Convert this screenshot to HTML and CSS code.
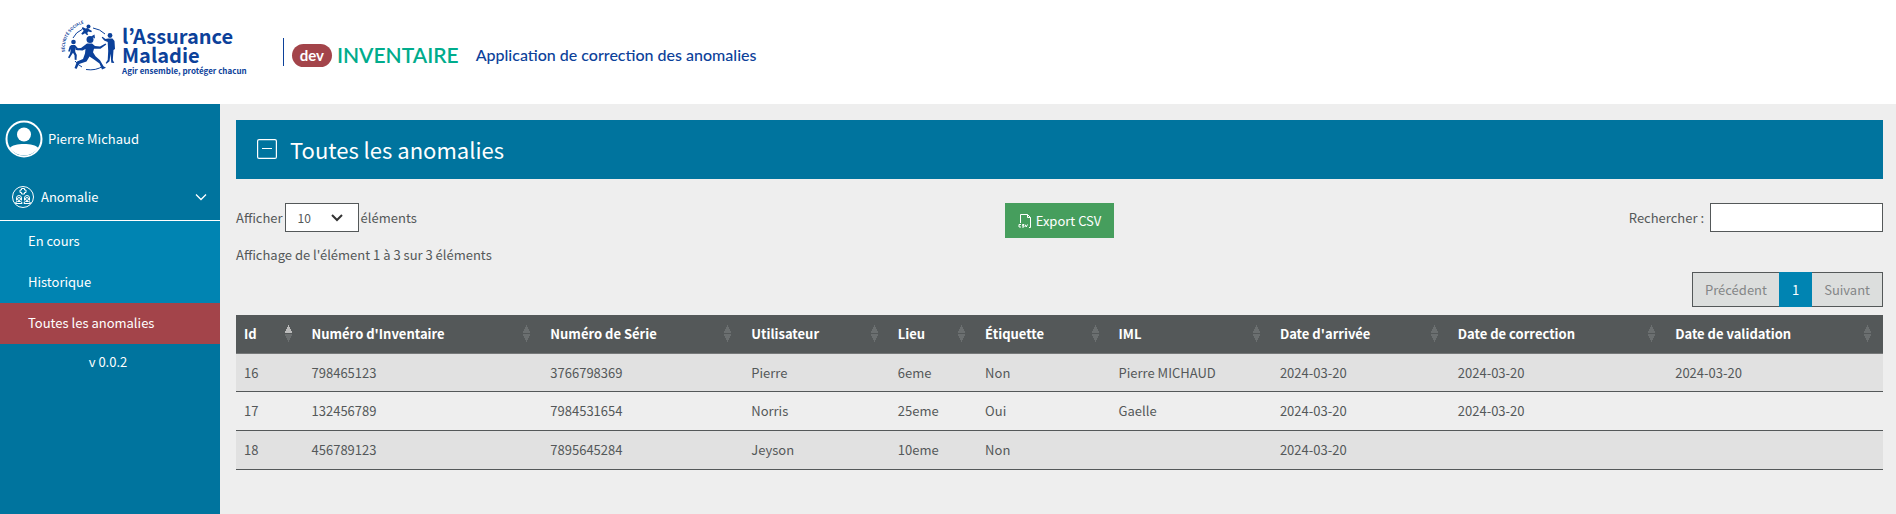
FILE: index.html
```html
<!DOCTYPE html>
<html lang="fr">
<head>
<meta charset="utf-8">
<meta name="viewport" content="width=device-width, initial-scale=1">
<title>Inventaire - Toutes les anomalies</title>
<link rel="stylesheet" href="styles.css">
</head>
<body>
<header class="header">
  <a class="logo" href="#">
    <svg class="logo-mark" viewBox="0 0 54 68" aria-hidden="true">
      <path id="arc" d="M3 34A26 26 0 0 1 31 4.500" fill="none"/>
      <text class="logo-arc"><textPath href="#arc">SÉCURITÉ SOCIALE</textPath></text>
      <g fill="none" stroke="#0c419a" stroke-width="1">
        <path d="M11 20Q14 14 20 11.500M31 10Q38 11 43 16M13 43Q16 47 20 49M24 51.500Q34 53 41 48"/>
      </g>
      <g fill="#0c419a">
        <circle cx="28" cy="21.500" r="3.500"/>
        <path d="M29 18.500l3.500-2 .5 4z"/>
        <path d="M25 25.500l5 0 3 2.500 5 .5 5.500-3 .8 1-5.800 4.200-6.500 0-1 3.500 2.500 4 4.500 4 3.500 6 2.500 1.500-4 1.800-2.500-6-5.500-4-4.500-3-3 5-7.500 2.500-2.500 5-2-1 2.500-6.500 6-2.500 2-5.500 .5-4.500-3 1.500-6.500-.5-1.500-1.500 6.500-.5z"/>
        <circle cx="11.500" cy="24" r="2.300"/>
        <path d="M9.500 27l3.500 0 4 4.500-1 1-3-2.500 .3 4 1.500 3-.3 5-1.800-.2-.2-4.500-1.500-2.500-2 3-1.500 2.500-1.500-.8 2-3.700 1-5-1.500 3-1.300-.5 1.500-5z"/>
        <circle cx="48" cy="17.500" r="2.400"/>
        <path d="M46 20.500l4.500 0 2 2.500 .5 8-1.500 1-.7 10 1.500 3-3-.3-.8-9-1 7.500-3 2.500-.8-.8 2-3 .5-9-.5-9-3.500-1.500-2.500-3 .8-.7 3 2.300z"/>
        <circle cx="26.500" cy="8.500" r="2"/>
        <path d="M20.500 9l3 1.500 2-.5 2 1.500 2.500 1.500-.8 1.300-3-.8-1 1.500 1 1.500-1.200 .8-2-2-2.500 1.500-1.300-1 2.500-3-1.800-2z"/>
      </g>
    </svg>
    <span class="logo-text">
      <strong class="logo-name">l’Assurance</strong>
      <strong class="logo-name">Maladie</strong>
      <span class="logo-tagline">Agir ensemble, protéger chacun</span>
    </span>
  </a>
  <div class="app">
    <span class="app-env">dev</span>
    <span class="app-name">INVENTAIRE</span>
    <span class="app-desc">Application de correction des anomalies</span>
  </div>
</header>
<div class="body">
  <aside class="sidebar">
    <a class="user" href="#">
      <svg class="avatar" viewBox="0 0 38 38" aria-hidden="true">
        <circle cx="19" cy="19" r="17.500" fill="none" stroke="#fff" stroke-width="2"/>
        <circle cx="19" cy="14.500" r="7" fill="#fff"/>
        <path d="M4.500 28C9 22.500 29 22.500 33.500 28A18 18 0 0 1 4.500 28Z" fill="#fff"/>
      </svg>
      Pierre Michaud
    </a>
    <button class="menu" type="button" aria-expanded="true">
      <svg class="menu-icon" viewBox="0 0 24 24" fill="none" stroke="#fff" aria-hidden="true">
        <circle cx="12" cy="12" r="10.500"/>
        <path d="M10.500 3.500h3v1.500h1.500v2.500h-1.500v1.500h-3v-1.500h-1.500v-2.500h1.500z"/>
        <path d="M5.500 15.500v-2.500q0-2.500 2.500-2.500t2.500 2.500v2.500M13.500 15.500v-2.500q0-2.500 2.500-2.500t2.500 2.500v2.500M4.500 18.500q0-2 2-2h3q1.500 0 1.500 2zM13 18.500q0-2 1.500-2h3q2 0 2 2z"/>
        <circle cx="8" cy="14" r="1.500"/><circle cx="16" cy="14" r="1.500"/>
      </svg>
      <span>Anomalie</span>
      <svg class="menu-chevron" viewBox="0 0 12 8" fill="none" stroke="#fff" stroke-width="1.300" aria-hidden="true"><path d="M1 1.500l5 5 5-5"/></svg>
    </button>
    <nav class="submenu">
      <a class="submenu-link" href="#">En cours</a>
      <a class="submenu-link" href="#">Historique</a>
      <a class="submenu-link active" href="#" aria-current="page">Toutes les anomalies</a>
    </nav>
    <p class="version">v 0.0.2</p>
  </aside>
  <main class="main">
    <h1 class="title">
      <svg class="title-icon" viewBox="0 0 20 20" fill="none" stroke="#fff" aria-hidden="true"><rect x=".6" y=".6" width="18.800" height="18.800" rx="1.500" stroke-width="1.200"/><path d="M5 9.500h10"/></svg>
      Toutes les anomalies
    </h1>
    <div class="toolbar">
      <label class="length">Afficher
        <select class="length-select"><option>10</option><option>25</option><option>50</option></select>
        éléments</label>
      <button class="export" type="button">
        <svg class="export-icon" viewBox="0 0 14 14" fill="none" stroke="#fff" aria-hidden="true"><path d="M2.500 9V.500h7l3 3v10H11M9.500.500v3h3"/><path d="M3 10.500H1v2.500h2M6 10.500H4.500v1.200H6V13H4M7 10.500l1.200 2.500 1.300-2.500"/></svg>
        Export CSV
      </button>
      <div class="search">
        <label for="search">Rechercher :</label>
        <input class="search-input" id="search" type="search">
      </div>
    </div>
    <p class="info">Affichage de l'élément 1 à 3 sur 3 éléments</p>
    <nav class="pages" aria-label="Pagination">
      <button class="page" type="button" disabled>Précédent</button>
      <button class="page current" type="button" aria-current="page">1</button>
      <button class="page" type="button" disabled>Suivant</button>
    </nav>
    <table class="table">
      <colgroup>
        <col class="c-id"><col class="c-inv"><col class="c-serie"><col class="c-user"><col class="c-lieu"><col class="c-etiq"><col class="c-iml"><col class="c-arr"><col class="c-corr"><col class="c-val">
      </colgroup>
      <thead>
        <tr>
          <th class="asc" aria-sort="ascending"><span class="th">Id</span></th>
          <th><span class="th">Numéro d'Inventaire</span></th>
          <th><span class="th">Numéro de Série</span></th>
          <th><span class="th">Utilisateur</span></th>
          <th><span class="th">Lieu</span></th>
          <th><span class="th">Étiquette</span></th>
          <th><span class="th">IML</span></th>
          <th><span class="th">Date d'arrivée</span></th>
          <th><span class="th">Date de correction</span></th>
          <th><span class="th">Date de validation</span></th>
        </tr>
      </thead>
      <tbody>
        <tr><td>16</td><td>798465123</td><td>3766798369</td><td>Pierre</td><td>6eme</td><td>Non</td><td>Pierre MICHAUD</td><td>2024-03-20</td><td>2024-03-20</td><td>2024-03-20</td></tr>
        <tr><td>17</td><td>132456789</td><td>7984531654</td><td>Norris</td><td>25eme</td><td>Oui</td><td>Gaelle</td><td>2024-03-20</td><td>2024-03-20</td><td></td></tr>
        <tr><td>18</td><td>456789123</td><td>7895645284</td><td>Jeyson</td><td>10eme</td><td>Non</td><td></td><td>2024-03-20</td><td></td><td></td></tr>
      </tbody>
    </table>
  </main>
</div>
</body>
</html>
```

FILE: styles.css
```css
* { box-sizing: border-box; }
body {
  margin: 0;
  min-height: 100vh;
  display: flex;
  flex-direction: column;
  background: #eee;
  color: #545859;
  font: 13px/20px "Noto Sans CJK KR", "Noto Sans", sans-serif;
}
button, input, select { font: inherit; color: inherit; border-radius: 0; }
a { color: inherit; text-decoration: none; }
p { margin: 0; }

.header {
  display: flex;
  align-items: center;
  gap: 36px;
  height: 104px;
  padding-left: 62px;
  background: #fff;
  color: #0c419a;
}
.logo { display: flex; align-items: center; gap: 6px; }
.logo-mark { width: 54px; height: 68px; overflow: visible; }
.logo-arc { font-size: 4px; font-weight: 700; fill: #0c419a; }
.logo-text { display: flex; flex-direction: column; white-space: nowrap; }
.logo-name { height: 19px; font-size: 20px; line-height: 19px; }
.logo-tagline { font-size: 8px; line-height: 14px; font-weight: 700; }
.app {
  display: flex;
  align-items: center;
  height: 28px;
  padding: 6px 0 0 8px;
  border-left: 1px solid #0c419a;
  font-family: Lato, sans-serif;
  font-weight: 500;
}
.app-env {
  padding: 0 8px;
  margin-right: 5px;
  border-radius: 12px;
  background: #a3444a;
  color: #fff;
  font-size: 15px;
  font-weight: 700;
  line-height: 23px;
}
.app-name { margin-right: 17px; color: #00ac8c; font-size: 21px; font-weight: 600; }
.app-desc { font-size: 16px; }

.body { flex: 1; display: flex; }
.sidebar { width: 220px; flex: none; background: #00749e; color: #fff; }
.user { display: flex; align-items: center; gap: 5px; padding: 16px 5px; }
.avatar { width: 38px; height: 38px; }
.menu {
  display: flex;
  align-items: center;
  gap: 6px;
  width: 100%;
  height: 47px;
  padding: 0 13px 1px 11px;
  border: 0;
  border-bottom: 1px solid #fff;
  background: none;
  color: #fff;
}
.menu-icon { width: 24px; height: 24px; }
.menu-chevron { width: 12px; height: 8px; margin-left: auto; }
.submenu { background: #0084b2; }
.submenu-link { display: block; padding: 10px 28px 11px; }
.submenu-link.active { background: #a3444a; }
.version { padding: 8px 4px 0 0; text-align: center; }

.main { flex: 1; min-width: 0; padding: 16px 13px 16px 16px; }
.title {
  display: flex;
  align-items: center;
  gap: 13px;
  height: 59px;
  margin: 0 0 24px;
  padding: 0 0 2px 21px;
  background: #00749e;
  color: #fff;
  font-size: 22px;
  font-weight: 400;
}
.title-icon { width: 20px; height: 20px; }
.toolbar { display: grid; grid-template-columns: 1fr auto 1fr; align-items: start; }
.length { display: flex; align-items: center; gap: 2px; }
.length-select {
  width: 74px;
  height: 29px;
  padding: 0 12px;
  border: 1px solid #545859;
  appearance: none;
  background: #fff url("data:image/svg+xml,%3Csvg xmlns='http://www.w3.org/2000/svg' viewBox='0 0 12 8' fill='none' stroke='%23333' stroke-width='2'%3E%3Cpath d='M1 1l5 5 5-5'/%3E%3C/svg%3E") no-repeat right 15px center / 12px 8px;
  font-size: 12px;
}
.export {
  display: flex;
  align-items: center;
  gap: 4px;
  height: 35px;
  padding: 0 13px;
  border: 0;
  background: #469e5d;
  color: #fff;
}
.export-icon { width: 14px; height: 14px; }
.search { display: flex; justify-content: flex-end; align-items: center; gap: 6px; }
.search-input { width: 173px; height: 29px; border: 1px solid #545859; background: #fff; appearance: none; }
.info { padding: 7px 0; }
.pages { display: flex; width: max-content; margin: 0 0 8px auto; border: 1px solid #545859; background: #dcdedd; }
.page { height: 33px; padding: 0 12px; border: 0; background: none; color: #848687; }
.page.current { height: 35px; margin: -1px 0; padding: 0 13px; background: #0084b2; color: #fff; }

.table { width: 100%; table-layout: fixed; border-collapse: separate; border-spacing: 0; }
.c-id { width: 4.1%; }
.c-inv { width: 14.5%; }
.c-serie { width: 12.2%; }
.c-user { width: 8.9%; }
.c-lieu { width: 5.3%; }
.c-etiq { width: 8.1%; }
.c-iml { width: 9.8%; }
.c-arr { width: 10.8%; }
.c-corr { width: 13.2%; }
.c-val { width: 13.1%; }
.table th, .table td { height: 39px; padding: 0 8px; text-align: left; white-space: nowrap; }
.table th { background: #545859; color: #fff; font-weight: 700; border-bottom: 1px solid #767879; }
.table td { border-bottom: 1px solid #545859; }
.table tbody tr:first-child td { height: 38px; }
.table tbody tr:nth-child(odd) { background: #e1e1e1; }
.th { display: flex; align-items: center; justify-content: space-between; }
.th::after {
  content: "";
  width: 9px;
  height: 17px;
  margin: 0 3px 2px 0;
  --up: #6b6f70;
  background:
    conic-gradient(from 153deg at 50% 0, var(--up) 54deg, transparent 0) top / 9px 8px no-repeat,
    conic-gradient(from -27deg at 50% 100%, #6b6f70 54deg, transparent 0) bottom / 9px 8px no-repeat;
}
.asc .th::after { --up: #bbb; }
```
